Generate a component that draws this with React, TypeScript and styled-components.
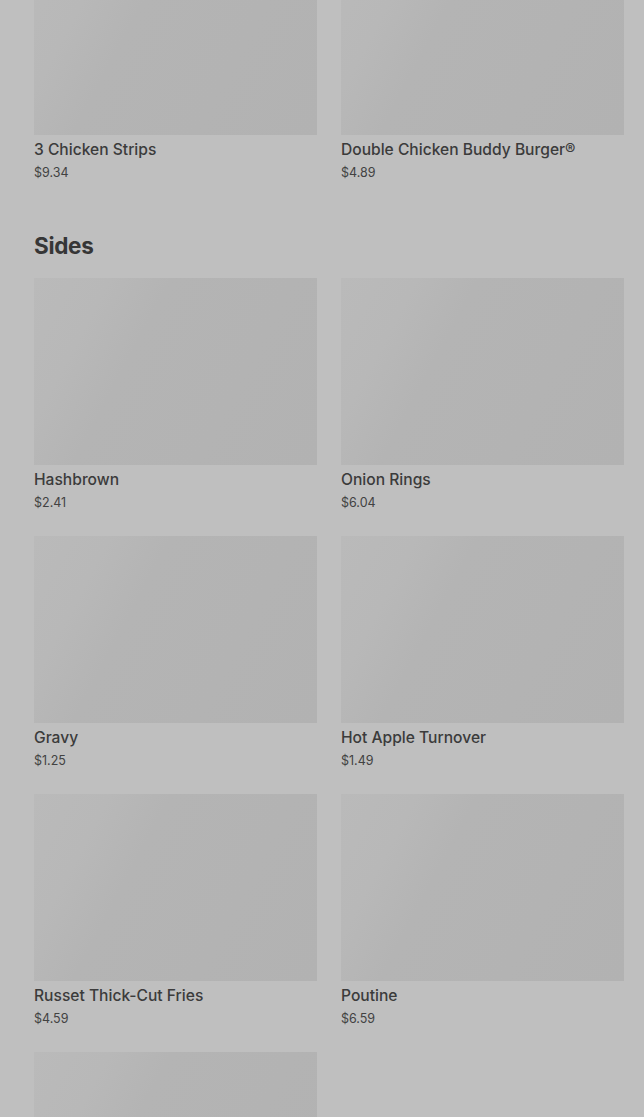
import React from "react";
import styled, { createGlobalStyle } from "styled-components";

const GlobalStyle = createGlobalStyle`
  html, body {
    margin: 0;
    padding: 0;
    background: #bfbfbf;
    overflow: hidden;
  }
  body {
    font-family: Inter, "Noto Sans", "Liberation Sans", sans-serif;
    color: #3a3a3a;
  }
`;

const Page = styled.div`
  padding: 0 20px 0 34px;
  /* page is scrolled part way into the menu */
  margin-top: -52px;
`;

const Section = styled.section`
  & + & {
    margin-top: 48px;
  }
`;

const SectionTitle = styled.h2`
  margin: 0 0 17px;
  font-size: 22.5px;
  line-height: 30px;
  font-weight: 700;
  letter-spacing: -0.3px;
  color: #363636;
`;

const Grid = styled.div`
  display: grid;
  grid-template-columns: repeat(2, 1fr);
  column-gap: 24px;
  row-gap: 23px;
`;

const Item = styled.div`
  display: flex;
  flex-direction: column;
`;

const Thumb = styled.div`
  height: 187px;
  background: linear-gradient(
    118deg,
    #bababa 0%,
    #b8b8b8 20%,
    #b4b4b4 36%,
    #b2b2b2 100%
  );
`;

const Name = styled.div`
  margin-top: 4px;
  font-size: 15.6px;
  line-height: 22px;
  font-weight: 500;
  color: #3b3b3b;
`;

const Price = styled.div`
  margin-top: 2px;
  font-size: 12.5px;
  line-height: 20px;
  font-weight: 400;
  color: #424242;
`;

type MenuItem = { name?: string; price?: string };

const sections: { title?: string; items: MenuItem[] }[] = [
  {
    items: [
      { name: "3 Chicken Strips", price: "$9.34" },
      { name: "Double Chicken Buddy Burger®", price: "$4.89" },
    ],
  },
  {
    title: "Sides",
    items: [
      { name: "Hashbrown", price: "$2.41" },
      { name: "Onion Rings", price: "$6.04" },
      { name: "Gravy", price: "$1.25" },
      { name: "Hot Apple Turnover", price: "$1.49" },
      { name: "Russet Thick-Cut Fries", price: "$4.59" },
      { name: "Poutine", price: "$6.59" },
      {},
    ],
  },
];

const App: React.FC = () => {
  return (
    <>
      <GlobalStyle />
      <Page>
        {sections.map((section, i) => (
          <Section key={i}>
            {section.title && <SectionTitle>{section.title}</SectionTitle>}
            <Grid>
              {section.items.map((item, j) => (
                <Item key={j}>
                  <Thumb />
                  {item.name && <Name>{item.name}</Name>}
                  {item.price && <Price>{item.price}</Price>}
                </Item>
              ))}
            </Grid>
          </Section>
        ))}
      </Page>
    </>
  );
};

export default App;
